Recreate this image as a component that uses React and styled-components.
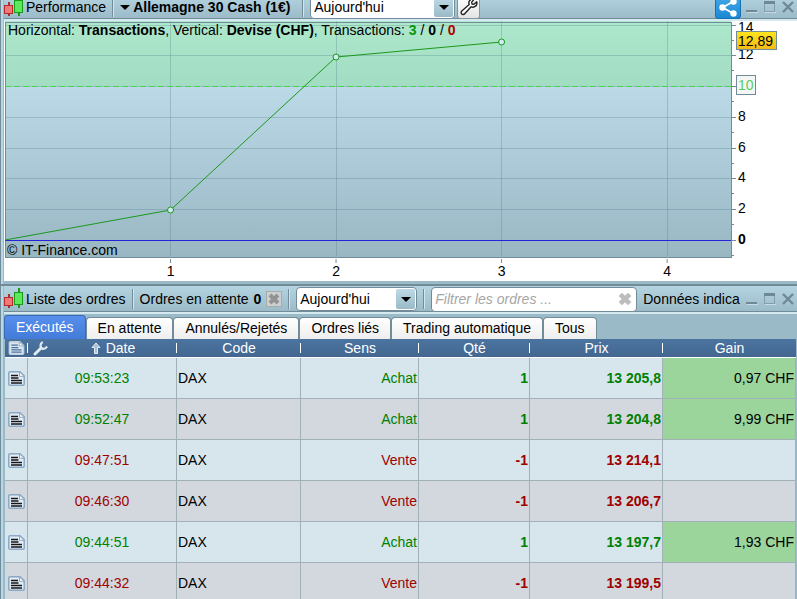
import React from "react";
import styled, { createGlobalStyle } from "styled-components";

const GlobalStyle = createGlobalStyle`
  * { box-sizing: border-box; }
  body {
    margin: 0;
    background: #9bbac7;
    font: 14px/18px "Liberation Sans", Arial, sans-serif;
    color: #000;
    overflow: hidden;
  }
  button, input, select { font: inherit; color: inherit; margin: 0; padding: 0; }
`;

const Workspace = styled.div`
  display: flex;
  flex-direction: column;
  height: 100vh;
  overflow: hidden;
`;

const Panel = styled.section`
  flex: none;
  border-left: 1px solid #718b98;
  padding-left: 3px;
  box-shadow: inset 2px 0 0 #b9d8e5;
  ${(p) => p.$divided && "border-top: 2px solid #718b98;"}
`;

const ChartPanel = styled(Panel)`
  padding-bottom: 3px;
`;

const ToolbarClip = styled.div`
  display: flex;
  flex-direction: column;
  justify-content: flex-end;
  height: 21px;
  overflow: hidden;
`;

const Toolbar = styled.header`
  flex: none;
  display: flex;
  align-items: center;
  height: ${(p) => (p.$compact ? 26 : 28)}px;
  padding-right: 3px;
  white-space: nowrap;
  background: linear-gradient(#b5d4e1, #9bbac7);
  border-bottom: 2px solid #d6e9f1;
  box-shadow: inset 0 -1px 0 #718b98;
`;

const Title = styled.h2`
  margin: 0 0 0 2px;
  font: inherit;
`;

const Divider = styled.span`
  flex: none;
  width: 2px;
  height: 20px;
  margin: 0 6px;
  background: linear-gradient(90deg, #718b98 50%, #d1e6ef 50%);
`;

const Instrument = styled.button`
  display: flex;
  align-items: center;
  gap: 3px;
  width: 176px;
  border: 0;
  background: none;
  font-weight: bold;
  white-space: nowrap;
`;

const SelectBox = styled.span`
  display: grid;
  flex: none;
  align-items: center;
  width: ${(p) => p.$width}px;
  height: 24px;
  border: 1px solid #718b98;
  border-radius: 4px;
  background: #fff;

  > * { grid-area: 1 / 1; }
  select {
    appearance: none;
    width: 100%;
    height: 22px;
    padding: 0 24px 0 3px;
    border: 0;
    background: none;
  }
`;

const SelectArrow = styled.span`
  display: grid;
  place-items: center;
  justify-self: end;
  width: 19px;
  height: 20px;
  margin-right: 1px;
  border-radius: 2px;
  background: linear-gradient(#bddae6, #9bbac7);
  pointer-events: none;
`;

const SquareButton = styled.button`
  flex: none;
  display: grid;
  place-items: center;
  width: 23px;
  height: 24px;
  margin-left: 2px;
  border: 1px solid #8194a0;
  border-radius: 3px;
  background: linear-gradient(#fff, #e4e4e4);
`;

const ShareButton = styled(SquareButton)`
  width: 26px;
  margin-left: auto;
  border-color: #1272b4;
  background: linear-gradient(#45a8ea, #1b88d3);
`;

const CancelButton = styled.button`
  display: grid;
  place-items: center;
  width: 16px;
  height: 16px;
  margin-left: 5px;
  border: 1px solid #aaa;
  background: #cbd0d2;
`;

const PendingLabel = styled.span`
  b { margin-left: 1px; }
`;

const SearchBox = styled.label`
  flex: none;
  display: flex;
  align-items: center;
  width: 206px;
  height: 25px;
  padding: 0 4px 0 3px;
  border: 1px solid #718b98;
  border-radius: 4px;
  background: #fff;

  input {
    flex: 1;
    min-width: 0;
    border: 0;
    outline: 0;
    background: none;
  }
  input::placeholder { color: #a6a6a6; font-style: italic; opacity: 1; }
`;

const ClearButton = styled.button`
  display: grid;
  place-items: center;
  border: 0;
  background: none;
`;

const Notice = styled.span`
  flex: 1;
  min-width: 0;
  margin-left: 6px;
  overflow: hidden;
`;

const WindowButtons = styled.span`
  flex: none;
  display: flex;
  gap: 6px;
  margin-left: 5px;
  button { display: grid; width: 12px; border: 0; background: none; }
`;

const Chart = styled.div`
  display: grid;
  grid-template-columns: 1fr 66px;
  height: 260px;
  background: #fff;

  svg { display: block; width: 100%; height: 260px; overflow: visible; }
  text { font-size: 14px; }
`;

const PlotArea = styled.div`
  position: relative;
  margin-left: 1px;
`;

const Legend = styled.p`
  position: absolute;
  top: 0;
  left: 3px;
  margin: 0;
  white-space: nowrap;
`;

const Copyright = styled(Legend)`
  top: 220px;
  left: 2px;
`;

const Count = styled.b`
  color: ${(p) => p.$color};
`;

const Tabs = styled.nav`
  display: flex;
  align-items: flex-end;
  height: 25px;
`;

const Tab = styled.button`
  flex: none;
  height: ${(p) => (p.$active ? 24 : 22)}px;
  padding: ${(p) => (p.$active ? "0 11px 1px" : "0 11px 1px")};
  border: 1px solid ${(p) => (p.$active ? "#3a69b8" : "#718b98")};
  border-bottom: 0;
  border-radius: 4px 4px 0 0;
  color: ${(p) => (p.$active ? "#fff" : "#000")};
  background: ${(p) => (p.$active ? "linear-gradient(#588fed, #427bd8)" : "linear-gradient(#fff, #eee)")};
`;

const Orders = styled.table`
  width: calc(100% - 2px);
  margin-left: 1px;
  table-layout: fixed;
  border-collapse: separate;
  border-spacing: 0;
`;

const Col = styled.col`
  width: ${(p) => (p.$width ? `${p.$width}px` : "auto")};
`;

const HeadCell = styled.th`
  height: 19px;
  padding: 0;
  color: #fff;
  font-weight: normal;
  border-bottom: 1px solid #fff;
  background:
    linear-gradient(#fff, #fff) right 4px / ${(p) => (p.$last ? "0 0" : "1px 10px")} no-repeat,
    linear-gradient(#4b74a0, #436790);
  svg { display: block; }
`;

const HeadContent = styled.span`
  display: flex;
  align-items: center;
  padding-left: 3px;
`;

const ColumnSettings = styled.button`
  width: 18px;
  padding-left: 2px;
  border: 0;
  background: none;
`;

const SortLabel = styled.button`
  flex: 1;
  display: flex;
  align-items: center;
  justify-content: center;
  gap: 5px;
  border: 0;
  background: none;
`;

const Row = styled.tr`
  color: ${(p) => (p.$buy ? "#008000" : "#a00000")};
  background: #d7e6ed;
  &:nth-child(even) { background: #d2d8de; }
`;

const Cell = styled.td`
  height: 41px;
  padding: 0 1px;
  text-align: ${(p) => p.$align || "left"};
  font-weight: ${(p) => (p.$bold ? "bold" : "normal")};
  border-right: 1px solid #a2b0b8;
  border-bottom: 1px solid #a2b0b8;
  white-space: nowrap;
`;

const CodeCell = styled(Cell)`
  color: #000;
`;

const GainCell = styled(CodeCell)`
  background: ${(p) => (p.$filled ? "#9bd59b" : "none")};
`;

const IconCell = styled(Cell)`
  padding: 0 0 0 3px;
  svg { display: block; }
`;

const Candles = () => (
  <svg width="20" height="22" viewBox="0 0 20 22" shapeRendering="crispEdges" aria-hidden="true">
    <path d="M4.5 6v14" stroke="#b32b2b" strokeWidth="2" />
    <rect x=".5" y="9.5" width="8" height="8" fill="#ef7878" stroke="#b32b2b" />
    <path d="M14.5 0v20" stroke="#169c16" strokeWidth="2" />
    <rect x="10.5" y="4.5" width="8" height="12" fill="#5ee85e" stroke="#169c16" />
  </svg>
);

const Caret = () => (
  <svg width="10" height="5" viewBox="0 0 10 5" aria-hidden="true">
    <path d="M0 0h10L5 5z" />
  </svg>
);

const Wrench = () => (
  <svg width="18" height="18" viewBox="0 0 18 18" aria-hidden="true">
    <path
      d="M11 1.5c1-.7 2.3-.8 3.300-.4l-2.600 3 .3 1.900 1.900.3 2.800-2.600c.6 2-.2 4.100-2 5-1.100.6-2.500.6-3.600.1l-6.400 7c-.8.9-2.200 1-3 .2s-.8-2.200.1-3l7.400-6.500C8.500 4.700 9.100 2.600 11 1.500z"
      fill="#fff"
      stroke="#222"
      strokeWidth="1.4"
      strokeLinejoin="round"
    />
  </svg>
);

const SmallWrench = () => (
  <svg width="15" height="15" viewBox="0 0 15 15" fill="none" aria-hidden="true">
    <path d="M2 13l6-6" stroke="#dfe9f1" strokeWidth="3" strokeLinecap="round" />
    <path d="M9 1.5C7.5 3 7.3 5.200 8.200 6.800s3.500 1.300 5.300-.6" stroke="#dfe9f1" strokeWidth="2.200" strokeLinecap="round" />
  </svg>
);

const ShareIcon = () => (
  <svg width="20" height="20" viewBox="0 0 20 20" fill="#fff" aria-hidden="true">
    <path d="M15.5 4.5L4.5 10.5l11 6" fill="none" stroke="#fff" strokeWidth="1.8" />
    <circle cx="4.5" cy="10.5" r="3.2" />
    <circle cx="15.5" cy="4.5" r="3.2" />
    <circle cx="15.5" cy="16.5" r="3.2" />
  </svg>
);

const Cross = ({ size, color }) => (
  <svg width={size} height={size} viewBox="0 0 12 12" aria-hidden="true">
    <path d="M2 2l8 8M10 2l-8 8" stroke={color} strokeWidth="4" />
  </svg>
);

const DocIcon = ({ light }) => (
  <svg width="17" height={light ? 14 : 15} viewBox="0 0 17 15" aria-hidden="true">
    <path
      d="M2 .8h10l4.200 4V13q0 1.200-1.200 1.200H2Q.8 14.200.8 13V2Q.8.8 2 .8z"
      fill={light ? "#dbe7f1" : "#e3edf6"}
      stroke={light ? "#bfd0e0" : "#8ba8c4"}
      strokeWidth="1.5"
    />
    <path d="M11.5 1v4.300h4.500z" fill="#fff" stroke="#8ba8c4" />
    <path
      d="M3 4.5h7M3 7h7.500M3 9.500h11M3 12h11"
      stroke={light ? "#4c719c" : "#151515"}
      strokeWidth="1.4"
    />
  </svg>
);

const WindowControls = () => (
  <WindowButtons>
    <button aria-label="Réduire">
      <svg width="12" height="14" viewBox="0 0 12 14">
        <path d="M1 12.5h11" stroke="#c7dbe4" />
        <path d="M0 11h11" stroke="#6f8896" strokeWidth="2" />
      </svg>
    </button>
    <button aria-label="Agrandir">
      <svg width="12" height="14" viewBox="0 0 12 14" fill="none">
        <path d="M.5 2.5h10v9H.5z" stroke="#839da9" />
        <path d="M0 2.5h11" stroke="#6f8896" strokeWidth="3" />
        <path d="M1 12.5h11" stroke="#c7dbe4" />
      </svg>
    </button>
    <button aria-label="Fermer">
      <svg width="12" height="14" viewBox="0 0 12 14">
        <path d="M1 2l10 10M11 2L1 12" stroke="#6f8896" strokeWidth="2.4" />
      </svg>
    </button>
  </WindowButtons>
);

const PeriodSelect = ({ label, width }) => (
  <SelectBox $width={width}>
    <select aria-label={label} defaultValue="today">
      <option value="today">Aujourd'hui</option>
    </select>
    <SelectArrow><Caret /></SelectArrow>
  </SelectBox>
);

const points = [
  { x: 0, y: 219 },
  { x: 22.8, y: 189 },
  { x: 45.6, y: 36 },
  { x: 68.4, y: 21 },
];
const columns = [22.8, 45.6, 68.4, 91.2];
const levels = [4, 34, 65, 96, 127, 157, 188, 219];
const levelLabels = { 4: "14", 34: "12", 96: "8", 127: "6", 157: "4", 188: "2", 219: "0" };

const PerformancePlot = () => (
  <svg role="img" aria-label="Performance">
    <defs>
      <linearGradient id="plot" x2="0" y2="1">
        <stop stopColor="#c8e6f4" />
        <stop offset="1" stopColor="#99b7c3" />
      </linearGradient>
      <linearGradient id="gain" x2="0" y2="1">
        <stop stopColor="#ade8cc" />
        <stop offset="1" stopColor="#a2dcc3" />
      </linearGradient>
    </defs>
    <rect width="100%" height="236" fill="url(#plot)" />
    <rect width="100%" height="65" fill="url(#gain)" />
    <g stroke="#42697b" strokeOpacity=".25" shapeRendering="crispEdges">
      {levels.slice(0, -1).map((y) => <line key={y} x1="0" x2="100%" y1={y + 0.5} y2={y + 0.5} />)}
      {columns.map((x) => <line key={x} x1={`${x}%`} x2={`${x}%`} y1="0" y2="235" />)}
    </g>
    <rect x="0" y="1" width="100%" height="235" fill="none" stroke="#718b98" shapeRendering="crispEdges" />
    <g shapeRendering="crispEdges">
      <line x1="0" x2="100%" y1="65.5" y2="65.5" stroke="#4bd24b" strokeDasharray="6 3" />
      <line x1="0" x2="100%" y1="219.5" y2="219.5" stroke="#2424dc" />
    </g>
    <g stroke="#1c981c">
      {points.slice(1).map((p, i) => (
        <line key={p.x} x1={`${points[i].x}%`} y1={points[i].y} x2={`${p.x}%`} y2={p.y} />
      ))}
      {points.slice(1).map((p) => <circle key={p.x} cx={`${p.x}%`} cy={p.y} r="3" fill="#cfeaf0" />)}
    </g>
    {columns.map((x, i) => (
      <g key={x}>
        <line x1={`${x}%`} x2={`${x}%`} y1="238" y2="242" stroke="#718b98" />
        <text x={`${x}%`} y="255" textAnchor="middle">{i + 1}</text>
      </g>
    ))}
  </svg>
);

const ValueAxis = () => (
  <svg aria-label="Devise (CHF)">
    <defs>
      <linearGradient id="gold" x2="0" y2="1">
        <stop stopColor="#ffe51c" />
        <stop offset="1" stopColor="#f4b916" />
      </linearGradient>
    </defs>
    {levels.map((y) => (
      <g key={y}>
        <path d={`M1 ${y}.5h4M1 ${y + 15}.5h2`} stroke="#718b98" />
        {levelLabels[y] && (
          <text x="7" y={Math.max(y + 4, 11)} fontWeight={y === 219 ? "bold" : "normal"}>
            {levelLabels[y]}
          </text>
        )}
      </g>
    ))}
    <rect x="5.5" y="10.5" width="40" height="18" fill="url(#gold)" stroke="#718b98" />
    <text x="7" y="25">12,89</text>
    <rect x="5.5" y="54.5" width="19" height="19" fill="#f4f5f5" stroke="#718b98" />
    <text x="7" y="69" fill="#5bce5b">10</text>
  </svg>
);

const tabs = ["Exécutés", "En attente", "Annulés/Rejetés", "Ordres liés", "Trading automatique", "Tous"];

const orders = [
  { time: "09:53:23", buy: true, price: "13 205,8", gain: "0,97 CHF" },
  { time: "09:52:47", buy: true, price: "13 204,8", gain: "9,99 CHF" },
  { time: "09:47:51", buy: false, price: "13 214,1" },
  { time: "09:46:30", buy: false, price: "13 206,7" },
  { time: "09:44:51", buy: true, price: "13 197,7", gain: "1,93 CHF" },
  { time: "09:44:32", buy: false, price: "13 199,5" },
];

export default function App() {
  return (
    <Workspace>
      <GlobalStyle />
      <ChartPanel>
        <ToolbarClip>
          <Toolbar $compact>
            <Candles />
            <Title>Performance</Title>
            <Divider />
            <Instrument><Caret />Allemagne 30 Cash (1€)</Instrument>
            <Divider />
            <PeriodSelect label="Période" width={145} />
            <SquareButton aria-label="Réglages"><Wrench /></SquareButton>
            <ShareButton aria-label="Partager"><ShareIcon /></ShareButton>
            <WindowControls />
          </Toolbar>
        </ToolbarClip>
        <Chart>
          <PlotArea>
            <PerformancePlot />
            <Legend>
              Horizontal: <b>Transactions</b>, Vertical: <b>Devise (CHF)</b>, Transactions:{" "}
              <Count $color="#0a960a">3</Count> / <b>0</b> / <Count $color="#b00000">0</Count>
            </Legend>
            <Copyright>© IT-Finance.com</Copyright>
          </PlotArea>
          <ValueAxis />
        </Chart>
      </ChartPanel>

      <Panel $divided>
        <Toolbar>
          <Candles />
          <Title>Liste des ordres</Title>
          <Divider />
          <PendingLabel>Ordres en attente <b>0</b></PendingLabel>
          <CancelButton aria-label="Annuler les ordres"><Cross size={12} color="#929292" /></CancelButton>
          <Divider />
          <PeriodSelect label="Période des ordres" width={121} />
          <Divider />
          <SearchBox>
            <input type="text" aria-label="Filtrer les ordres" placeholder="Filtrer les ordres ..." />
            <ClearButton aria-label="Effacer"><Cross size={14} color="#bcbcbc" /></ClearButton>
          </SearchBox>
          <Notice>Données indica</Notice>
          <WindowControls />
        </Toolbar>
        <Tabs>
          {tabs.map((tab, i) => <Tab key={tab} $active={i === 0}>{tab}</Tab>)}
        </Tabs>
        <Orders>
          <colgroup>
            {[23, 149, 124, 118, 111, 133, 0].map((width, i) => <Col key={i} $width={width} />)}
          </colgroup>
          <thead>
            <tr>
              <HeadCell aria-label="Détails"><HeadContent><DocIcon light /></HeadContent></HeadCell>
              <HeadCell>
                <HeadContent>
                  <ColumnSettings aria-label="Colonnes"><SmallWrench /></ColumnSettings>
                  <SortLabel>
                    <svg width="10" height="12" viewBox="0 0 10 12" aria-hidden="true">
                      <path d="M5 1l4 4.5H6.500v6h-3v-6H1z" fill="#aac0d6" stroke="#e3edf5" />
                    </svg>
                    Date
                  </SortLabel>
                </HeadContent>
              </HeadCell>
              {["Code", "Sens", "Qté", "Prix"].map((name) => <HeadCell key={name}>{name}</HeadCell>)}
              <HeadCell $last>Gain</HeadCell>
            </tr>
          </thead>
          <tbody>
            {orders.map((order) => (
              <Row key={order.time} $buy={order.buy}>
                <IconCell><DocIcon /></IconCell>
                <Cell $align="center">{order.time}</Cell>
                <CodeCell>DAX</CodeCell>
                <Cell $align="right">{order.buy ? "Achat" : "Vente"}</Cell>
                <Cell $align="right" $bold>{order.buy ? "1" : "-1"}</Cell>
                <Cell $align="right" $bold>{order.price}</Cell>
                <GainCell $align="right" $filled={order.gain}>{order.gain}</GainCell>
              </Row>
            ))}
          </tbody>
        </Orders>
      </Panel>
    </Workspace>
  );
}
